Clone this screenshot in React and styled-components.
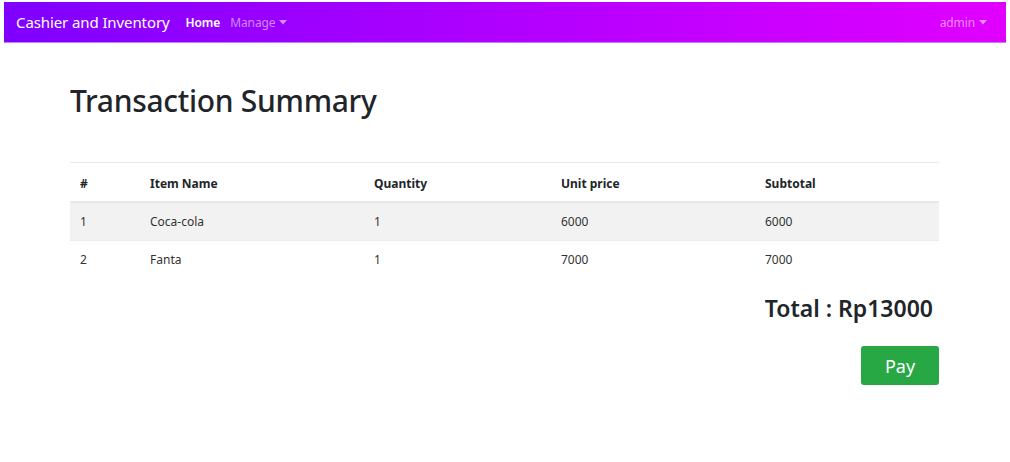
import React from 'react'
import styled, { createGlobalStyle } from 'styled-components';

const GlobalStyle = createGlobalStyle`
  body {
    margin: 0;
    background: #fff;
    font-family: "Noto Sans", "Open Sans", sans-serif;
    color: #212529;
  }
`;

const items = [
    { name: 'Coca-cola', qty: 1, price: 6000 },
    { name: 'Fanta', qty: 1, price: 7000 },
];

const Caret = () => (
    <svg width="8" height="5" viewBox="0 0 8 5" style={{ marginLeft: 4 }}>
        <path d="M0 0 L8 0 L4 4.5 Z" fill="currentColor" />
    </svg>
)

const App = () => {
    const total = items.reduce((sum, it) => sum + it.qty * it.price, 0)

    return (
        <Page>
            <GlobalStyle />
            <Navbar>
                <Brand>Cashier and Inventory</Brand>
                <NavLink active>Home</NavLink>
                <NavLink>Manage<Caret /></NavLink>
                <Spacer />
                <NavLink>admin<Caret /></NavLink>
            </Navbar>
            <Container>
                <Title>Transaction Summary</Title>
                <Table>
                    <colgroup>
                        <col style={{ width: 70 }} />
                        <col style={{ width: 224 }} />
                        <col style={{ width: 187 }} />
                        <col style={{ width: 204 }} />
                        <col />
                    </colgroup>
                    <thead>
                        <tr>
                            <Th>#</Th>
                            <Th>Item Name</Th>
                            <Th>Quantity</Th>
                            <Th>Unit price</Th>
                            <Th>Subtotal</Th>
                        </tr>
                    </thead>
                    <tbody>
                        {items.map((it, index) => (
                            <Row key={index} striped={index % 2 === 0}>
                                <Td>{index + 1}</Td>
                                <Td>{it.name}</Td>
                                <Td>{it.qty}</Td>
                                <Td>{it.price}</Td>
                                <Td>{it.qty * it.price}</Td>
                            </Row>
                        ))}
                    </tbody>
                </Table>
                <Footer>
                    <Total>Total : Rp{total}</Total>
                    <PayButton>Pay</PayButton>
                </Footer>
            </Container>
        </Page>
    )
}

export default App


const Page = styled.div`
  padding: 2px 4px 0 4px;
`;

const Navbar = styled.nav`
  display: flex;
  align-items: center;
  height: 41px;
  padding: 0 13px 0 12px;
  background: linear-gradient(90deg, #7f00ff 0%, #e100ff 100%);
  border-bottom: 1px solid #c77dff;
  box-sizing: border-box;
`;

const Brand = styled.div`
  color: #fff;
  font-size: 15px;
  letter-spacing: -0.1px;
  margin-right: 12px;
  padding-bottom: 1px;
`;

const NavLink = styled.div`
  display: flex;
  align-items: center;
  font-size: 12px;
  letter-spacing: -0.1px;
  padding: 0 4px;
  margin-right: 2px;
  color: ${p => p.active ? '#fff' : 'rgba(255,255,255,0.55)'};
  font-weight: ${p => p.active ? 600 : 400};
`;

const Spacer = styled.div`
  flex: 1;
`;

const Container = styled.div`
  padding: 0 67px 0 66px;
`;

const Title = styled.h1`
  margin: 40px 0 43px 0;
  font-size: 30px;
  letter-spacing: -0.3px;
  font-weight: 500;
  line-height: 1.2;
  color: #212529;
`;

const Table = styled.table`
  width: 100%;
  border-collapse: collapse;
  table-layout: fixed;
  font-size: 12px;
`;

const Th = styled.th`
  text-align: left;
  font-weight: 700;
  padding: 12px 10px 9px 10px;
  border-top: 1px solid #e9ecef;
  border-bottom: 2px solid #e5e7eb;
  height: 16px;
`;

const Row = styled.tr`
  background: ${p => p.striped ? '#f2f2f2' : 'transparent'};
`;

const Td = styled.td`
  padding: 0 10px;
  height: 37px;
  border-top: 1px solid #e9ecef;
  color: #333;
`;

const Footer = styled.div`
  display: flex;
  flex-direction: column;
  align-items: flex-end;
`;

const Total = styled.div`
  margin: 14px 6px 0 0;
  font-size: 23px;
  font-weight: 600;
  color: #212529;
`;

const PayButton = styled.button`
  margin-top: 22px;
  width: 78px;
  height: 39px;
  border: none;
  border-radius: 3px;
  background: #28a745;
  color: #fff;
  font-family: inherit;
  font-size: 18px;
`;
